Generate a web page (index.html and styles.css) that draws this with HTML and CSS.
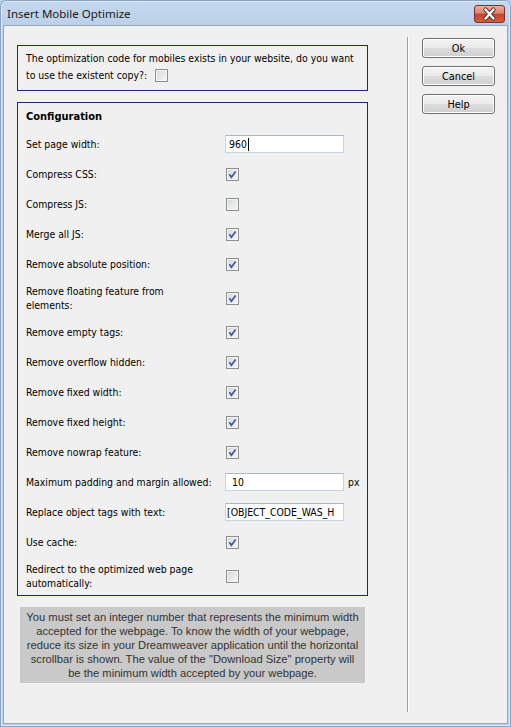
FILE: index.html
```html
<!DOCTYPE html>
<html lang="en">
<head>
<meta charset="utf-8">
<title>Insert Mobile Optimize</title>
<link rel="stylesheet" href="styles.css">
</head>
<body>
<div class="window">
  <div class="titlebar">
    <span class="title">Insert Mobile Optimize</span>
    <span class="close" aria-label="Close">
      <svg width="31" height="18" viewBox="0 0 31 18">
        <path d="M11.5 4.5 L19.5 13.5 M19.5 4.5 L11.5 13.5" stroke="#5a2a22" stroke-width="4.2" stroke-linecap="round" fill="none"/>
        <path d="M11.5 4.5 L19.5 13.5 M19.5 4.5 L11.5 13.5" stroke="#ffffff" stroke-width="2.4" stroke-linecap="round" fill="none"/>
      </svg>
    </span>
  </div>
  <div class="client">
    <div class="main">
      <div class="box notice">
        <p>The optimization code for mobiles exists in your website, do you want<br>to use the existent copy?: <span class="cb inline"></span></p>
      </div>
      <div class="box config">
        <div class="heading">Configuration</div>
        <div class="row"><span class="label">Set page width:</span><span class="input">960<span class="caret"></span></span></div>
        <div class="row"><span class="label">Compress CSS:</span><span class="cb checked"></span></div>
        <div class="row"><span class="label">Compress JS:</span><span class="cb"></span></div>
        <div class="row"><span class="label">Merge all JS:</span><span class="cb checked"></span></div>
        <div class="row"><span class="label">Remove absolute position:</span><span class="cb checked"></span></div>
        <div class="row tall"><span class="label">Remove floating feature from<br>elements:</span><span class="cb checked"></span></div>
        <div class="row"><span class="label">Remove empty tags:</span><span class="cb checked"></span></div>
        <div class="row"><span class="label">Remove overflow hidden:</span><span class="cb checked"></span></div>
        <div class="row"><span class="label">Remove fixed width:</span><span class="cb checked"></span></div>
        <div class="row"><span class="label">Remove fixed height:</span><span class="cb checked"></span></div>
        <div class="row"><span class="label">Remove nowrap feature:</span><span class="cb checked"></span></div>
        <div class="row"><span class="label">Maximum padding and margin allowed:</span><span class="input pad">10</span><span class="unit">px</span></div>
        <div class="row"><span class="label">Replace object tags with text:</span><span class="input obj"><span class="scroll">[OBJECT_CODE_WAS_H</span></span></div>
        <div class="row"><span class="label">Use cache:</span><span class="cb checked"></span></div>
        <div class="row tall"><span class="label">Redirect to the optimized web page<br>automatically:</span><span class="cb"></span></div>
      </div>
      <div class="note">You must set an integer number that represents the minimum width<br>accepted for the webpage. To know the width of your webpage,<br>reduce its size in your Dreamweaver application until the horizontal<br>scrollbar is shown. The value of the "Download Size" property will<br>be the minimum width accepted by your webpage.</div>
    </div>
    <div class="sep"></div>
    <div class="buttons">
      <span class="btn">Ok</span>
      <span class="btn">Cancel</span>
      <span class="btn">Help</span>
    </div>
  </div>
</div>
</body>
</html>
```
FILE: styles.css
```css
* { box-sizing: border-box; }
html, body { margin: 0; padding: 0; }
body { width: 511px; height: 727px; overflow: hidden; background: #b9d1ea; }

.window {
  width: 511px;
  height: 727px;
  display: flex;
  flex-direction: column;
  background: linear-gradient(#c4d7ed, #b7cde7 40px, #b6cfea);
  border-radius: 6px 6px 0 0;
  box-shadow: inset 0 0 0 1px #8aa3c2, inset 0 0 0 2px #dce8f5;
}

.titlebar {
  height: 25px;
  flex: none;
  display: flex;
  align-items: center;
  justify-content: space-between;
  padding: 0 6px 0 7px;
}
.title {
  font-family: "Noto Sans", "Liberation Sans", sans-serif;
  font-size: 11.5px;
  color: #1a1a1a;
  margin-top: 1px;
}
.close {
  width: 31px;
  height: 18px;
  margin-top: 2px;
  border: 1px solid #7a3327;
  border-radius: 3px;
  background: linear-gradient(#eab0a3 0%, #d9806d 45%, #c4452e 52%, #d0603f 100%);
  display: flex;
  align-items: center;
  justify-content: center;
  overflow: hidden;
}
.close svg { display: block; margin: -1px; }

.client {
  flex: 1;
  margin: 0 3px 3px 3px;
  border: 1px solid #98a8bc;
  background: #f0f0f0;
  display: flex;
  font-family: "DejaVu Sans Condensed", "Liberation Sans", sans-serif;
  font-size: 10.4px;
  color: #000;
}

.main {
  width: 364px;
  flex: none;
  padding: 19px 0 0 13px;
}

.box {
  border: 1px solid #1b2b68;
}
.notice {
  height: 46px;
  padding: 4px 4px 0 8px;
}
.notice p {
  margin: 0;
  line-height: 17px;
  white-space: nowrap;
}
.config {
  margin-top: 11px;
  padding: 6px 8px 0 8px;
}
.heading {
  font-weight: bold;
  line-height: 16px;
  height: 16px;
  margin-bottom: 4px;
  font-size: 11px;
}
.row {
  height: 30px;
  display: flex;
  align-items: center;
}
.row.tall { height: 38px; }
.label {
  width: 199px;
  flex: none;
  line-height: 14px;
  white-space: nowrap;
}

.cb {
  width: 13px;
  height: 13px;
  flex: none;
  margin-left: 1px;
  border: 1px solid #8e8f8f;
  background: linear-gradient(135deg, #d5d7da, #f7f7f7);
  box-shadow: inset 0 0 0 1px #f4f4f4;
  display: inline-block;
}
.cb.inline {
  margin-left: 5px;
  vertical-align: -3px;
}
.cb.checked {
  background:
    url("data:image/svg+xml,%3Csvg xmlns='http://www.w3.org/2000/svg' width='11' height='11' viewBox='0 0 11 11'%3E%3Cpath d='M2.4 5.3 L4.4 8.2 L8.6 2.4' stroke='%23405a9c' stroke-width='1.7' fill='none' stroke-linejoin='miter'/%3E%3C/svg%3E") center / 11px 11px no-repeat,
    linear-gradient(135deg, #d5d7da, #f7f7f7);
}

.input {
  width: 119px;
  height: 18px;
  flex: none;
  background: #fff;
  border: 1px solid #c5d4e6;
  border-top-color: #abb8c9;
  padding: 0 0 0 3px;
  line-height: 16px;
  display: flex;
  align-items: center;
  white-space: nowrap;
  overflow: hidden;
}
.input.pad { padding-left: 6px; }
.input.obj { padding-left: 1px; }
.caret {
  display: inline-block;
  width: 1px;
  height: 13px;
  background: #000;
  margin-left: 1px;
}
.unit { margin-left: 4px; }

.note {
  margin: 11px 3px 0 3px;
  padding: 3px 0;
  background: #c9c9c9;
  color: #333;
  text-align: center;
  font-family: "Liberation Sans", Arial, sans-serif;
  font-size: 11.2px;
  line-height: 14px;
  white-space: nowrap;
}

.sep {
  width: 2px;
  flex: none;
  margin: 11px 0 11px 39px;
  background: #a0a0a0;
  border-right: 1px solid #ffffff;
}

.buttons {
  display: flex;
  flex-direction: column;
  gap: 8px;
  margin: 12px 0 0 13px;
}
.btn {
  width: 73px;
  height: 20px;
  border: 1px solid #707070;
  border-radius: 3px;
  background: linear-gradient(#f2f2f2 0%, #ebebeb 48%, #dddddd 52%, #cfcfcf 100%);
  box-shadow: inset 0 0 0 1px #fcfcfc;
  display: flex;
  align-items: center;
  justify-content: center;
  font-size: 10.8px;
}
```
